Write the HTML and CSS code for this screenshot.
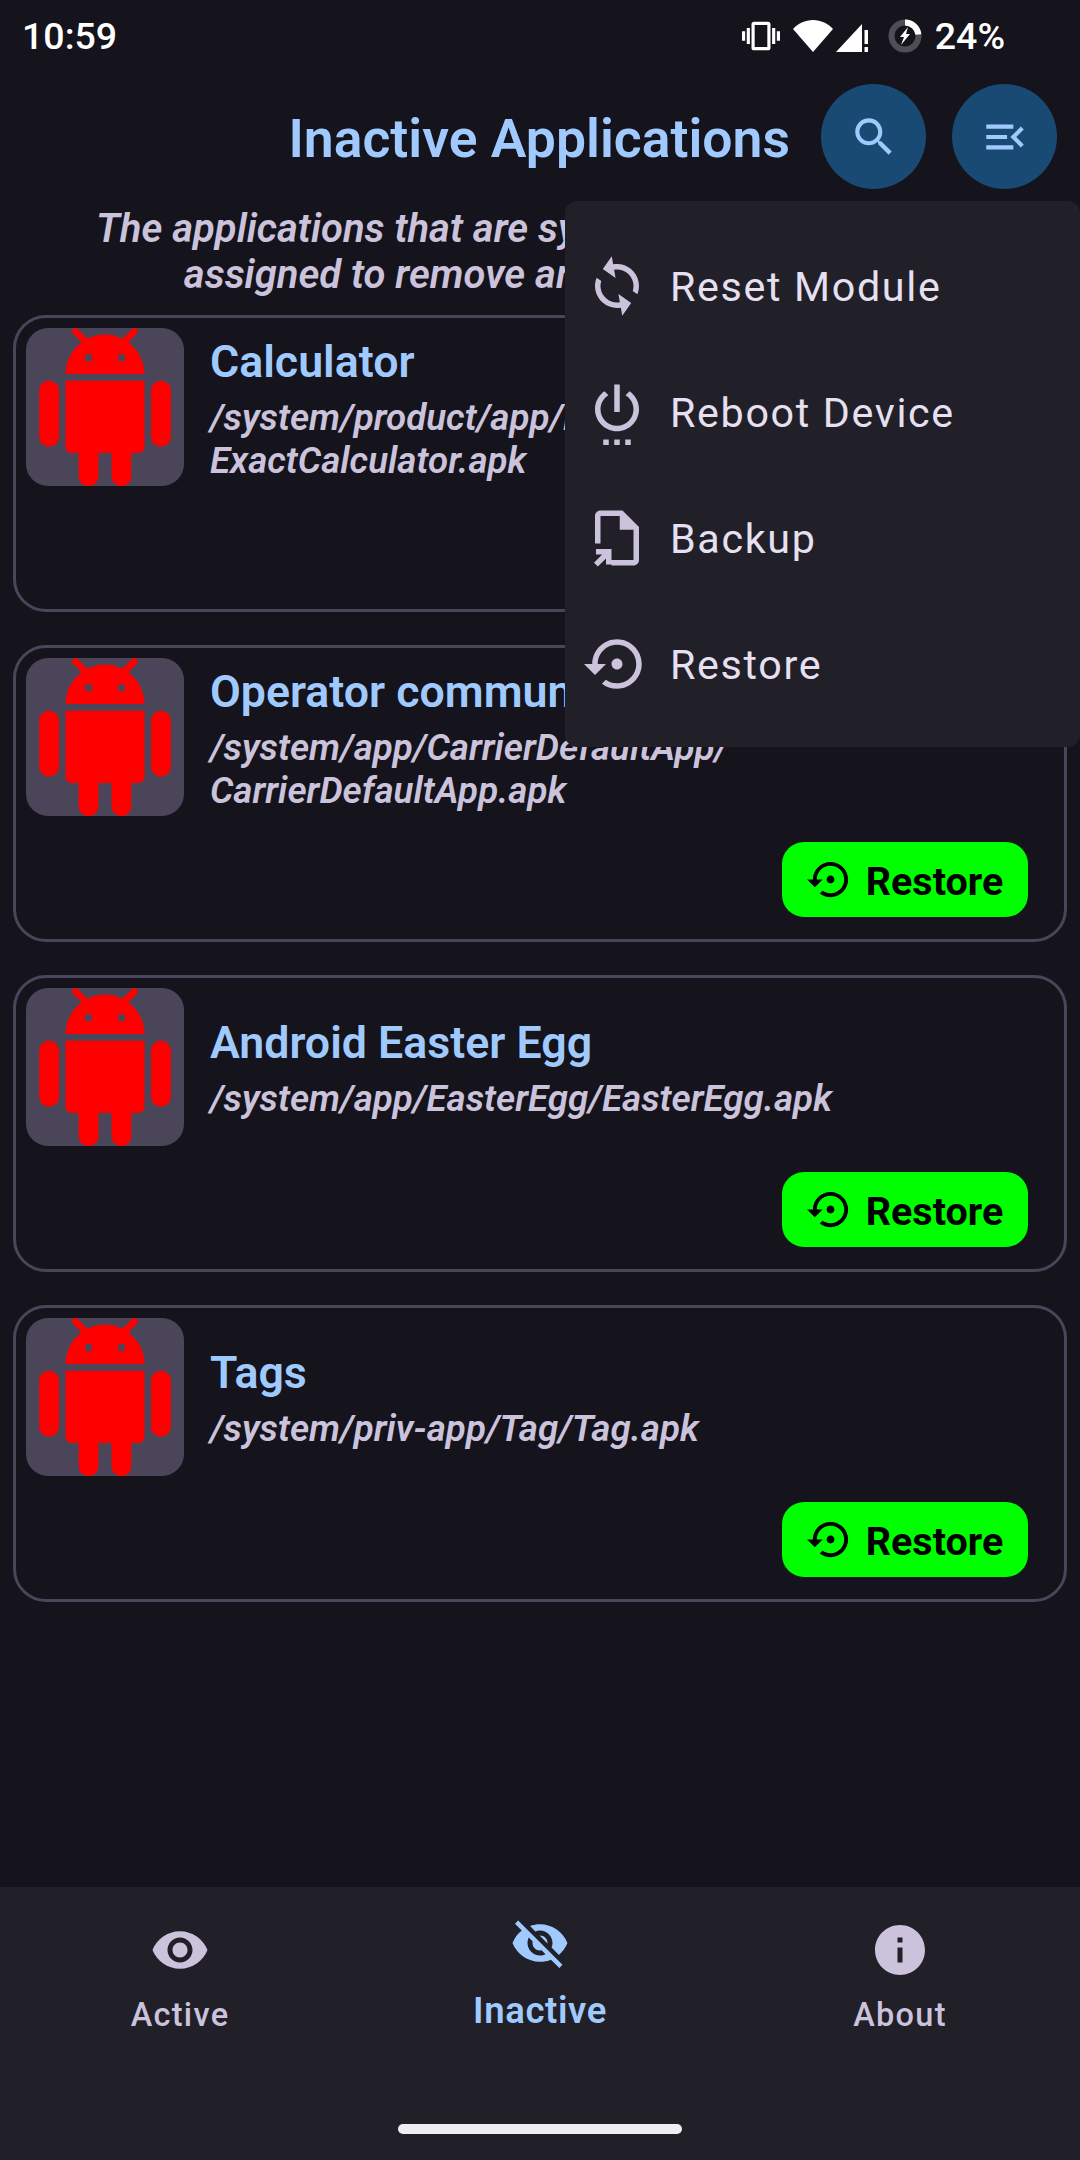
FILE: index.html
```html
<!DOCTYPE html>
<html lang="en">
<head>
    <meta charset="UTF-8">
    <title>Inactive Applications</title>
    <link rel="stylesheet" href="styles.css">
</head>
<body>
    <svg class="sprites" aria-hidden="true">
        <symbol id="android" viewBox="0 0 24 24"><path d="M6 18c0 .55.45 1 1 1h1v3.5c0 .83.67 1.5 1.5 1.5s1.5-.67 1.5-1.5V19h2v3.5c0 .83.67 1.5 1.5 1.5s1.5-.67 1.5-1.5V19h1c.55 0 1-.45 1-1V8H6v10zM3.5 8C2.67 8 2 8.67 2 9.5v7c0 .83.67 1.5 1.5 1.5S5 17.33 5 16.5v-7C5 8.67 4.33 8 3.5 8zm17 0c-.83 0-1.5.67-1.5 1.5v7c0 .83.67 1.5 1.5 1.5s1.5-.67 1.5-1.5v-7c0-.83-.67-1.5-1.5-1.5zm-4.97-5.84l1.3-1.3c.2-.2.2-.51 0-.71-.2-.2-.51-.2-.71 0l-1.48 1.48C13.85 1.23 12.95 1 12 1c-.96 0-1.86.23-2.66.63L7.85.15c-.2-.2-.51-.2-.71 0-.2.2-.2.51 0 .71l1.31 1.31C6.97 3.26 6 5.01 6 7h12c0-1.99-.97-3.75-2.47-4.84zM10 5H9V4h1v1zm5 0h-1V4h1v1z"/></symbol>
        <symbol id="restore" viewBox="0 0 24 24"><path d="M14 12c0-1.1-.9-2-2-2s-2 .9-2 2 .9 2 2 2 2-.9 2-2zm-2-9c-4.97 0-9 4.03-9 9H0l4 4 4-4H5c0-3.87 3.13-7 7-7s7 3.13 7 7-3.13 7-7 7c-1.51 0-2.91-.49-4.06-1.3l-1.42 1.44C8.04 20.3 9.94 21 12 21c4.97 0 9-4.03 9-9s-4.03-9-9-9z"/></symbol>
    </svg>

    <div class="status-bar">
        <span class="clock">10:59</span>
        <div class="status-icons">
            <svg class="ic-vibrate" viewBox="0 0 24 24"><path d="M0 15h2V9H0v6zm3 2h2V7H3v10zm19-8v6h2V9h-2zm-3 8h2V7h-2v10zM16.5 3h-9C6.67 3 6 3.67 6 4.5v15c0 .83.67 1.5 1.5 1.5h9c.83 0 1.5-.67 1.5-1.5v-15c0-.83-.67-1.5-1.5-1.5zM16 19H8V5h8v14z"/></svg>
            <svg class="ic-wifi" viewBox="0 0 40 32"><path d="M20 32L0 9C5 3.500 12 0 20 0s15 3.500 20 9z"/></svg>
            <svg class="ic-signal" viewBox="0 0 32 32"><path d="M0 32L26 4v28zM28.500 10H32v14h-3.500zM28.500 27H32v5h-3.500z"/></svg>
            <svg class="ic-battery" viewBox="0 0 34 34">
                <circle cx="17" cy="17" r="13.500" fill="none" stroke="#4f4d55" stroke-width="6"/>
                <path d="M17 3.500A13.500 13.500 0 0 1 30.400 15.500" fill="none" stroke="#fff" stroke-width="6"/>
                <path d="M20 8l-8 10h4l-3 8 9-11h-4z"/>
            </svg>
            <span class="battery-text">24%</span>
        </div>
    </div>

    <header class="top-bar">
        <h1 class="page-title">Inactive Applications</h1>
        <button class="round-btn"><svg viewBox="0 0 24 24"><path d="M15.500 14h-.79l-.28-.27C15.410 12.590 16 11.110 16 9.500 16 5.910 13.090 3 9.500 3S3 5.910 3 9.500 5.910 16 9.500 16c1.610 0 3.090-.59 4.230-1.570l.27.28v.79l5 4.990L20.490 19l-4.990-5zm-6 0C7.010 14 5 11.990 5 9.500S7.010 5 9.500 5 14 7.010 14 9.500 11.990 14 9.500 14z"/></svg></button>
        <button class="round-btn"><svg viewBox="0 0 24 24"><path d="M3 18h13v-2H3v2zm0-5h10v-2H3v2zm0-7v2h13V6H3zm18 9.590L17.420 12 21 8.410 19.590 7l-5 5 5 5L21 15.590z"/></svg></button>
    </header>

    <p class="intro">The applications that are system apps and that you<br>assigned to remove are listed here below</p>

    <main class="app-list">
        <section class="app-card">
            <div class="app-row">
                <div class="app-icon"><svg><use href="#android"/></svg></div>
                <div class="app-info">
                    <div class="app-name">Calculator</div>
                    <div class="app-path">/system/product/app/ExactCalculator/<br>ExactCalculator.apk</div>
                </div>
            </div>
            <div class="app-actions"><button class="restore-btn"><svg><use href="#restore"/></svg><span>Restore</span></button></div>
        </section>
        <section class="app-card">
            <div class="app-row">
                <div class="app-icon"><svg><use href="#android"/></svg></div>
                <div class="app-info">
                    <div class="app-name">Operator communication</div>
                    <div class="app-path">/system/app/CarrierDefaultApp/<br>CarrierDefaultApp.apk</div>
                </div>
            </div>
            <div class="app-actions"><button class="restore-btn"><svg><use href="#restore"/></svg><span>Restore</span></button></div>
        </section>
        <section class="app-card">
            <div class="app-row">
                <div class="app-icon"><svg><use href="#android"/></svg></div>
                <div class="app-info">
                    <div class="app-name">Android Easter Egg</div>
                    <div class="app-path">/system/app/EasterEgg/EasterEgg.apk</div>
                </div>
            </div>
            <div class="app-actions"><button class="restore-btn"><svg><use href="#restore"/></svg><span>Restore</span></button></div>
        </section>
        <section class="app-card">
            <div class="app-row">
                <div class="app-icon"><svg><use href="#android"/></svg></div>
                <div class="app-info">
                    <div class="app-name">Tags</div>
                    <div class="app-path">/system/priv-app/Tag/Tag.apk</div>
                </div>
            </div>
            <div class="app-actions"><button class="restore-btn"><svg><use href="#restore"/></svg><span>Restore</span></button></div>
        </section>
    </main>

    <div class="popup-menu">
        <div class="menu-item">
            <svg class="sync-icon" viewBox="0 0 24 24"><path d="M12 4V1L8 5l4 4V6c3.310 0 6 2.690 6 6 0 1.010-.25 1.970-.7 2.800l1.460 1.460C19.540 15.030 20 13.570 20 12c0-4.420-3.580-8-8-8zm0 14c-3.310 0-6-2.690-6-6 0-1.010.25-1.970.7-2.800L5.240 7.740C4.460 8.970 4 10.430 4 12c0 4.420 3.580 8 8 8v3l4-4-4-4v3z"/></svg>
            <span>Reset Module</span>
        </div>
        <div class="menu-item">
            <svg viewBox="0 0 24 24"><path d="M7 24h2v-2H7v2zm4 0h2v-2h-2v2zm2-22h-2v10h2V2zm3.560 2.440l-1.450 1.450C16.840 6.940 18 8.830 18 11c0 3.310-2.690 6-6 6s-6-2.690-6-6c0-2.170 1.160-4.060 2.880-5.120L7.440 4.440C5.360 5.880 4 8.280 4 11c0 4.420 3.580 8 8 8s8-3.580 8-8c0-2.720-1.360-5.120-3.440-6.560zM15 24h2v-2h-2v2z"/></svg>
            <span>Reboot Device</span>
        </div>
        <div class="menu-item">
            <svg viewBox="0 0 24 24"><path d="M12 22h6c1.100 0 2-.9 2-2V8l-6-6H6c-1.100 0-2 .9-2 2v10h2V4h7v5h5v11h-8v2zM8 21.660v-2.240l-2.950 2.950-1.410-1.410L6.590 18H4.350v-2H10v5.660H8z"/></svg>
            <span>Backup</span>
        </div>
        <div class="menu-item">
            <svg viewBox="0 0 24 24"><use href="#restore"/></svg>
            <span>Restore</span>
        </div>
    </div>

    <nav class="bottom-nav">
        <div class="nav-items">
            <div class="nav-item">
                <svg viewBox="0 0 24 24"><path d="M12 4.500C7 4.500 2.730 7.610 1 12c1.730 4.390 6 7.500 11 7.500s9.270-3.110 11-7.500c-1.730-4.390-6-7.500-11-7.500zM12 17c-2.760 0-5-2.240-5-5s2.240-5 5-5 5 2.240 5 5-2.240 5-5 5zm0-8c-1.660 0-3 1.340-3 3s1.340 3 3 3 3-1.340 3-3-1.340-3-3-3z"/></svg>
                <span>Active</span>
            </div>
            <div class="nav-item nav-item-active">
                <svg viewBox="0 0 24 24"><path d="M12 7c2.760 0 5 2.240 5 5 0 .65-.13 1.260-.36 1.830l2.920 2.920c1.510-1.260 2.700-2.890 3.430-4.750-1.730-4.390-6-7.500-11-7.500-1.400 0-2.740.25-3.980.7l2.160 2.160C10.740 7.130 11.350 7 12 7zM2 4.270l2.280 2.280.46.46C3.080 8.300 1.780 10.020 1 12c1.730 4.390 6 7.500 11 7.500 1.550 0 3.030-.3 4.380-.84l.42.42L19.730 22 21 20.730 3.270 3 2 4.270zM7.530 9.800l1.550 1.550c-.05.21-.08.43-.08.65 0 1.660 1.340 3 3 3 .22 0 .44-.03.65-.08l1.550 1.550c-.67.33-1.410.53-2.200.53-2.760 0-5-2.240-5-5 0-.79.2-1.530.53-2.200zm4.310-.78l3.150 3.150.02-.16c0-1.660-1.340-3-3-3l-.17.010z"/></svg>
                <span>Inactive</span>
            </div>
            <div class="nav-item">
                <svg viewBox="0 0 24 24"><path d="M12 2C6.480 2 2 6.480 2 12s4.480 10 10 10 10-4.480 10-10S17.520 2 12 2zm1 15h-2v-6h2v6zm0-8h-2V7h2v2z"/></svg>
                <span>About</span>
            </div>
        </div>
        <div class="home-pill"></div>
    </nav>
</body>
</html>
```

FILE: styles.css
```css
* {
    box-sizing: border-box;
}

body {
    position: relative;
    display: flex;
    flex-direction: column;
    width: 1080px;
    height: 2160px;
    margin: 0;
    overflow: hidden;
    background-color: #15131b;
    font-family: Roboto, "Liberation Sans", sans-serif;
    color: #cbc3dc;
}

.sprites {
    display: none;
}

/* status bar */
.status-bar {
    display: flex;
    justify-content: space-between;
    align-items: center;
    height: 72px;
    padding: 0 75px 0 22px;
    color: #fff;
    font-size: 37.500px;
    font-weight: 500;
}

.status-icons {
    display: flex;
    align-items: center;
}

.status-icons svg {
    fill: #fff;
}

.ic-vibrate {
    width: 38px;
    height: 38px;
}

.ic-wifi {
    width: 40px;
    height: 32px;
    margin-left: 13px;
}

.ic-signal {
    width: 32px;
    height: 32px;
    margin-left: 3px;
}

.ic-battery {
    width: 34px;
    height: 34px;
    margin-left: 20px;
}

.battery-text {
    margin-left: 13px;
}

/* header */
.top-bar {
    display: flex;
    justify-content: flex-end;
    align-items: center;
    gap: 26px;
    height: 105px;
    margin-top: 12px;
    padding-right: 23px;
}

.page-title {
    margin: 3px 5px 0 0;
    font-size: 53.500px;
    font-weight: 600;
    color: #a0cafd;
}

.round-btn {
    display: flex;
    justify-content: center;
    align-items: center;
    width: 105px;
    height: 105px;
    padding: 0;
    border: none;
    border-radius: 50%;
    background-color: #194a74;
}

.round-btn svg {
    width: 50px;
    height: 50px;
    fill: #a0cafd;
}

.intro {
    margin: 17px 0;
    font-size: 40px;
    font-style: italic;
    font-weight: 600;
    line-height: 46px;
    text-align: center;
}

/* cards */
.app-list {
    display: flex;
    flex-direction: column;
    flex: 1;
    gap: 33px;
    padding: 0 13px;
}

.app-card {
    display: flex;
    flex-direction: column;
    height: 297px;
    padding: 10px;
    border: 3px solid #4a4558;
    border-radius: 33px;
}

.app-row {
    display: flex;
    align-items: center;
    gap: 26px;
}

.app-icon {
    flex-shrink: 0;
    width: 158px;
    height: 158px;
    border-radius: 22px;
    background-color: #4a4558;
}

.app-icon svg {
    display: block;
    width: 158px;
    height: 158px;
    fill: #f00;
}

.app-info {
    padding-top: 4px;
}

.app-name {
    margin-bottom: 9px;
    font-size: 44.700px;
    font-weight: 600;
    line-height: 52px;
    color: #a0cafd;
}

.app-path {
    font-size: 36.750px;
    font-style: italic;
    font-weight: 600;
    line-height: 42.500px;
}

.app-actions {
    display: flex;
    justify-content: flex-end;
    margin-top: 26px;
    padding-right: 26px;
}

.restore-btn {
    display: flex;
    justify-content: center;
    align-items: center;
    gap: 12px;
    width: 246px;
    height: 75px;
    padding: 0;
    border: none;
    border-radius: 22px;
    background-color: #0f0;
    font-family: inherit;
    font-size: 39.500px;
    font-weight: 700;
    color: #000;
}

.restore-btn svg {
    width: 47px;
    height: 47px;
    fill: #000;
}

.restore-btn span {
    margin-top: 3px;
}

/* overflow menu */
.popup-menu {
    position: absolute;
    top: 201px;
    right: 0;
    width: 515px;
    height: 546px;
    padding-top: 22px;
    border-radius: 12px;
    background-color: #211f28;
}

.menu-item {
    display: flex;
    align-items: center;
    gap: 20px;
    height: 126px;
    padding-left: 19px;
    font-size: 41.250px;
    letter-spacing: 1.650px;
    color: #e6e0f0;
}

.menu-item span {
    margin-top: 2px;
}

.menu-item svg {
    flex-shrink: 0;
    width: 66px;
    height: 66px;
    fill: #cbc3dc;
}

.sync-icon {
    transform: rotate(-10deg);
}

/* bottom nav */
.bottom-nav {
    display: flex;
    flex-direction: column;
    align-items: center;
    height: 273px;
    background-color: #211f28;
}

.nav-items {
    display: flex;
    width: 100%;
    height: 237px;
    padding-top: 33px;
}

.nav-item {
    display: flex;
    flex: 1;
    flex-direction: column;
    align-items: center;
    gap: 16px;
    font-size: 32.500px;
    font-weight: 500;
    letter-spacing: 1.300px;
}

.nav-item svg {
    width: 60px;
    height: 60px;
    fill: #cbc3dc;
}

.nav-item-active {
    margin-top: -7px;
    font-size: 36.500px;
    font-weight: 600;
    letter-spacing: 0.600px;
    color: #a0cafd;
}

.nav-item-active svg {
    fill: #a0cafd;
}

.home-pill {
    width: 284px;
    height: 10px;
    border-radius: 5px;
    background-color: #f0eef2;
}
```
